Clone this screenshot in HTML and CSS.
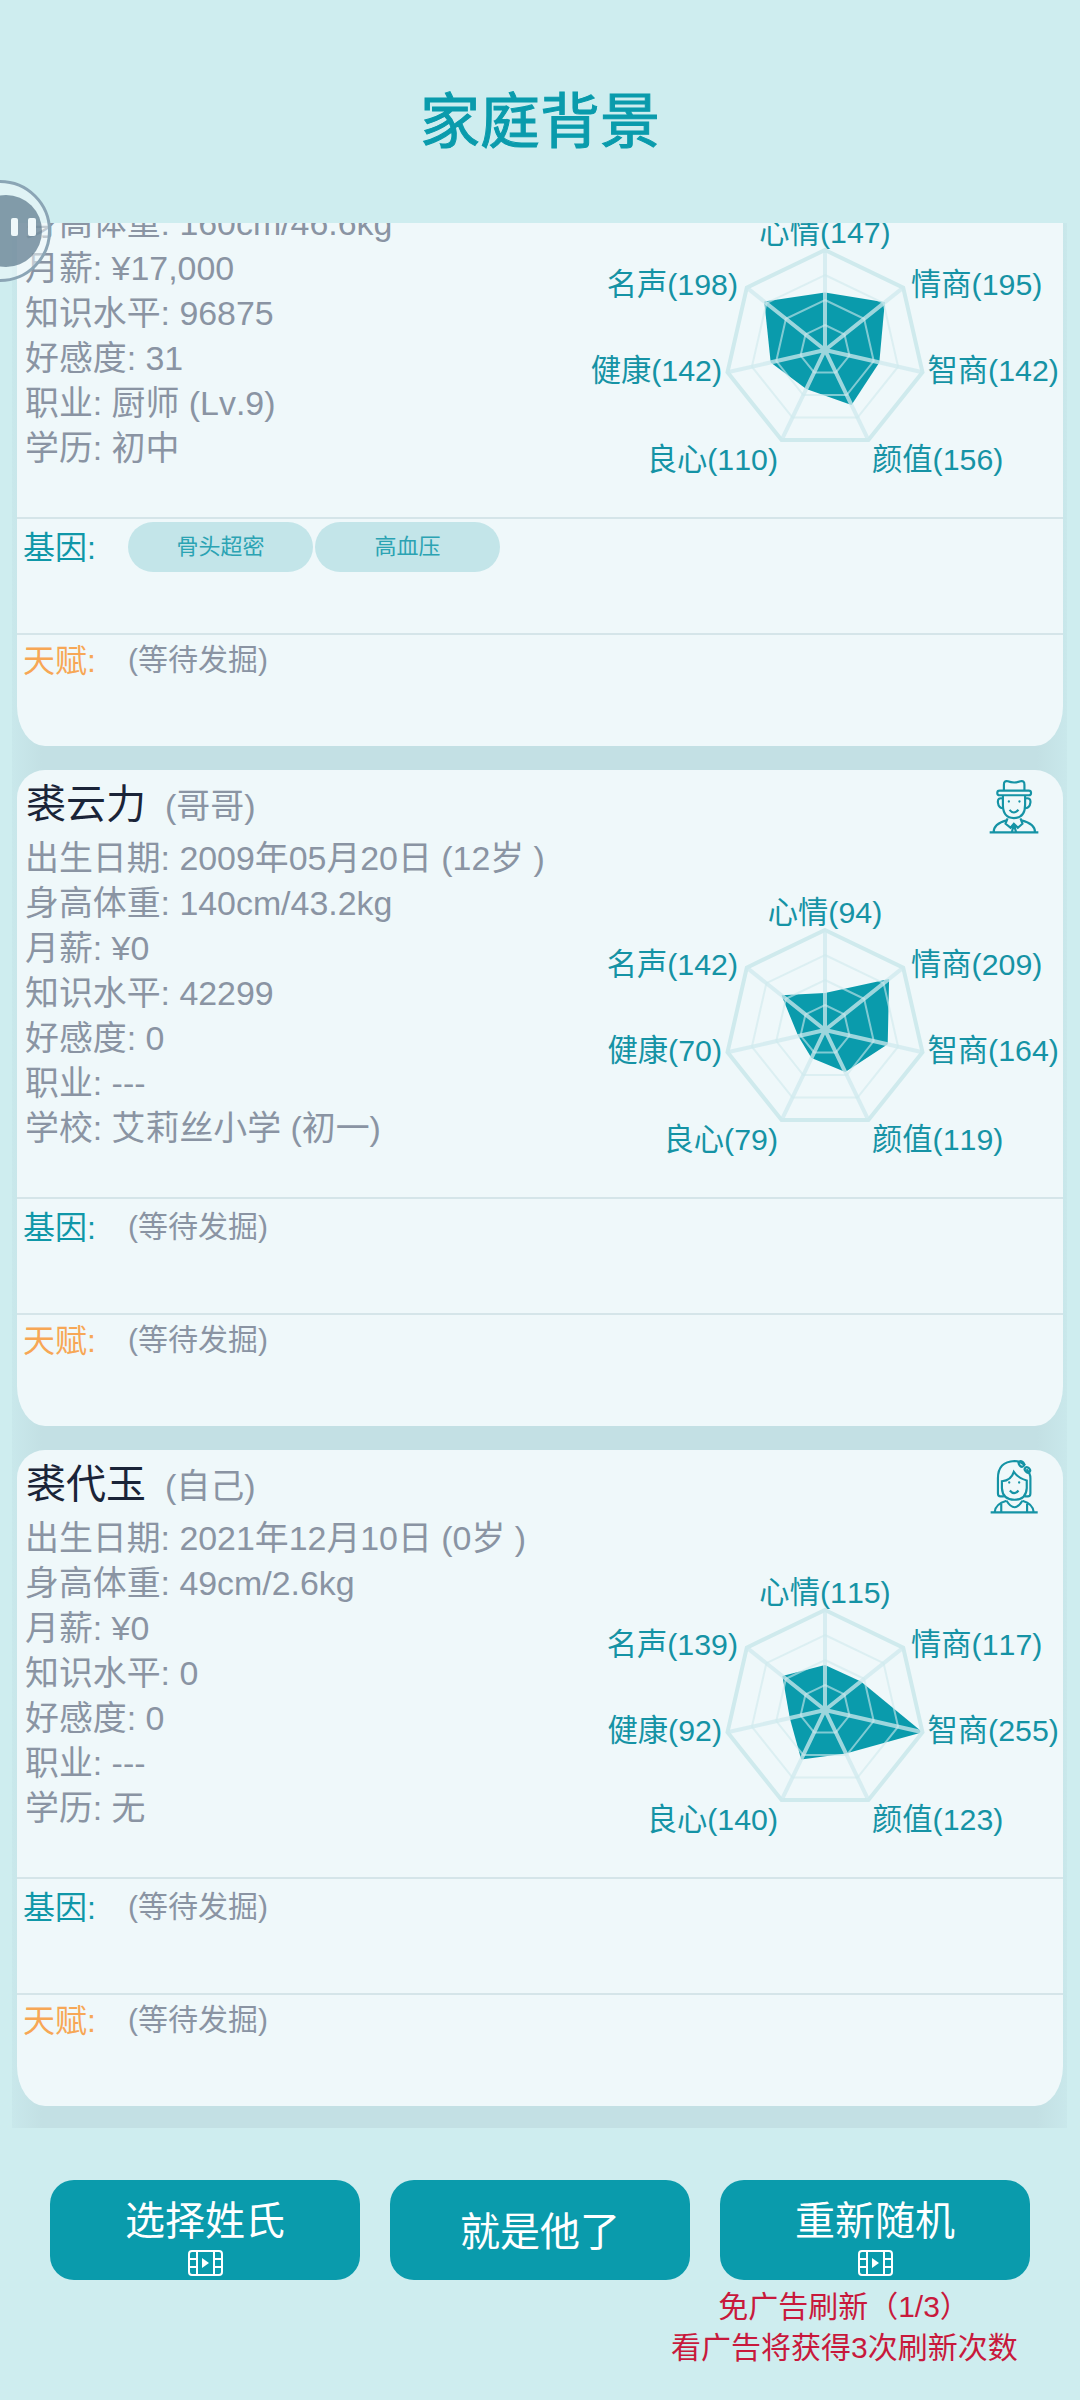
FILE: index.html
```html
<!DOCTYPE html>
<html lang="zh">
<head>
    <meta charset="UTF-8">
    <title>家庭背景</title>
    <link rel="stylesheet" href="styles.css">
</head>
<body>
    <svg class="defs">
        <defs>
            <g id="radar-grid">
                <polygon class="ring" points="0,-25 19.5,-15.6 24.4,5.6 10.8,22.5 -10.8,22.5 -24.4,5.6 -19.5,-15.6"/>
                <polygon class="ring" points="0,-50 39.1,-31.2 48.7,11.1 21.7,45 -21.7,45 -48.7,11.1 -39.1,-31.2"/>
                <polygon class="ring" points="0,-75 58.6,-46.8 73.1,16.7 32.5,67.6 -32.5,67.6 -73.1,16.7 -58.6,-46.8"/>
                <polygon class="ring-outer" points="0,-100 78.2,-62.4 97.5,22.3 43.4,90.1 -43.4,90.1 -97.5,22.3 -78.2,-62.4"/>
                <path class="spoke" d="M0 0L0 -100M0 0L78.2 -62.4M0 0L97.5 22.3M0 0L43.4 90.1M0 0L-43.4 90.1M0 0L-97.5 22.3M0 0L-78.2 -62.4"/>
            </g>
            <g id="ad-icon">
                <rect x="1" y="1" width="33" height="24" rx="3"/>
                <path d="M9 1V25M26 1V25M1 9H9M1 17H9M26 9H34M26 17H34"/>
                <polygon class="ad-play" points="14,8 21,13 14,18"/>
            </g>
        </defs>
    </svg>

    <header class="top-bar">
        <h1>家庭背景</h1>
    </header>

    <button class="float-ball">
        <span class="float-inner">
            <i></i><i></i>
        </span>
    </button>

    <main class="member-list">
        <!-- first card is already scrolled part way under the header -->
        <section class="card card-scrolled">
            <div class="card-body">
                <div class="info">
                    <p>身高体重: 160cm/46.6kg</p>
                    <p>月薪: ¥17,000</p>
                    <p>知识水平: 96875</p>
                    <p>好感度: 31</p>
                    <p>职业: 厨师 (Lv.9)</p>
                    <p>学历: 初中</p>
                </div>
                <svg class="radar" viewBox="-230 -194 460 361">
                    <polygon class="radar-data" points="0,-57.6 59.8,-47.7 54.3,12.4 26.5,55.1 -18.7,38.9 -54.3,12.4 -60.7,-48.4"/>
                    <use href="#radar-grid"/>
                    <text x="0" y="-107" text-anchor="middle">心情(147)</text>
                    <text x="86" y="-55">情商(195)</text>
                    <text x="102.5" y="31">智商(142)</text>
                    <text x="47" y="120">颜值(156)</text>
                    <text x="-47" y="120" text-anchor="end">良心(110)</text>
                    <text x="-103" y="31" text-anchor="end">健康(142)</text>
                    <text x="-87" y="-55" text-anchor="end">名声(198)</text>
                </svg>
            </div>
            <div class="trait-row gene-row">
                <span class="gene-label">基因:</span>
                <div class="chips">
                    <span class="chip">骨头超密</span>
                    <span class="chip">高血压</span>
                </div>
            </div>
            <div class="trait-row talent-row">
                <span class="talent-label">天赋:</span>
                <span class="pending">(等待发掘)</span>
            </div>
        </section>

        <section class="card">
            <div class="card-head">
                <span class="name">裘云力</span>
                <span class="relation">(哥哥)</span>
                <svg class="avatar" viewBox="80 55 160 170">
                    <path d="M128 92V74Q128 61 140 64Q159 71 178 64Q190 61 190 74V92"/>
                    <rect x="108" y="92" width="102" height="14" rx="7"/>
                    <path d="M125 106V135Q125 175 158 175Q192 175 192 135V106"/>
                    <path d="M125 116Q108 112 110 128Q112 145 127 145M192 116Q210 112 208 128Q206 145 190 145"/>
                    <circle class="dot" cx="143" cy="125" r="3.5"/>
                    <circle class="dot" cx="175" cy="125" r="3.5"/>
                    <path d="M145 150Q158 166 172 150"/>
                    <path d="M85 218H232M97 218Q97 192 136 182M222 218Q222 192 181 182"/>
                    <path d="M139 176L133 192L148 204L158 192L170 204L184 192L178 176M158 194L152 218M158 194L165 218"/>
                </svg>
            </div>
            <div class="card-body">
                <div class="info">
                    <p>出生日期: 2009年05月20日 (12岁 )</p>
                    <p>身高体重: 140cm/43.2kg</p>
                    <p>月薪: ¥0</p>
                    <p>知识水平: 42299</p>
                    <p>好感度: 0</p>
                    <p>职业: ---</p>
                    <p>学校: 艾莉丝小学 (初一)</p>
                </div>
                <svg class="radar" viewBox="-230 -194 460 361">
                    <polygon class="radar-data" points="0,-36.9 64.1,-51.1 62.7,14.3 20.3,42.1 -13.5,27.9 -26.8,6.1 -43.5,-34.7"/>
                    <use href="#radar-grid"/>
                    <text x="0" y="-107" text-anchor="middle">心情(94)</text>
                    <text x="86" y="-55">情商(209)</text>
                    <text x="102.5" y="31">智商(164)</text>
                    <text x="47" y="120">颜值(119)</text>
                    <text x="-47" y="120" text-anchor="end">良心(79)</text>
                    <text x="-103" y="31" text-anchor="end">健康(70)</text>
                    <text x="-87" y="-55" text-anchor="end">名声(142)</text>
                </svg>
            </div>
            <div class="trait-row gene-row">
                <span class="gene-label">基因:</span>
                <span class="pending">(等待发掘)</span>
            </div>
            <div class="trait-row talent-row">
                <span class="talent-label">天赋:</span>
                <span class="pending">(等待发掘)</span>
            </div>
        </section>

        <section class="card">
            <div class="card-head">
                <span class="name">裘代玉</span>
                <span class="relation">(自己)</span>
                <svg class="avatar" viewBox="80 55 160 170">
                    <path d="M128 170H118Q110 170 110 160V115Q110 65 160 63Q178 63 192 76M196 88Q208 100 208 115V160Q208 170 200 170H190"/>
                    <path d="M122 124Q150 122 158 96Q172 116 197 122V145Q195 180 160 180Q124 180 122 145Z"/>
                    <ellipse cx="181" cy="72" rx="9" ry="7" transform="rotate(45 181 72)"/>
                    <ellipse cx="199" cy="90" rx="9" ry="7" transform="rotate(45 199 90)"/>
                    <circle class="dot" cx="144" cy="128" r="3.5"/>
                    <circle class="dot" cx="174" cy="128" r="3.5"/>
                    <path d="M146 152Q159 168 172 152"/>
                    <path d="M88 218H230M100 218Q102 192 136 183M218 218Q216 192 184 183"/>
                    <path d="M120 218V192M198 218V192M136 183Q160 222 184 183"/>
                </svg>
            </div>
            <div class="card-body">
                <div class="info">
                    <p>出生日期: 2021年12月10日 (0岁 )</p>
                    <p>身高体重: 49cm/2.6kg</p>
                    <p>月薪: ¥0</p>
                    <p>知识水平: 0</p>
                    <p>好感度: 0</p>
                    <p>职业: ---</p>
                    <p>学历: 无</p>
                </div>
                <svg class="radar" viewBox="-230 -194 460 361">
                    <polygon class="radar-data" points="0,-45.1 35.9,-28.6 97.5,22.3 20.9,43.4 -23.8,49.5 -35.2,8 -42.6,-34"/>
                    <use href="#radar-grid"/>
                    <text x="0" y="-107" text-anchor="middle">心情(115)</text>
                    <text x="86" y="-55">情商(117)</text>
                    <text x="102.5" y="31">智商(255)</text>
                    <text x="47" y="120">颜值(123)</text>
                    <text x="-47" y="120" text-anchor="end">良心(140)</text>
                    <text x="-103" y="31" text-anchor="end">健康(92)</text>
                    <text x="-87" y="-55" text-anchor="end">名声(139)</text>
                </svg>
            </div>
            <div class="trait-row gene-row">
                <span class="gene-label">基因:</span>
                <span class="pending">(等待发掘)</span>
            </div>
            <div class="trait-row talent-row">
                <span class="talent-label">天赋:</span>
                <span class="pending">(等待发掘)</span>
            </div>
        </section>
    </main>

    <footer class="bottom-bar">
        <div class="actions">
            <button class="action-btn side-btn">
                <span>选择姓氏</span>
                <svg class="ad-icon" viewBox="0 0 35 26"><use href="#ad-icon"/></svg>
            </button>
            <button class="action-btn middle-btn">
                <span>就是他了</span>
            </button>
            <button class="action-btn side-btn">
                <span>重新随机</span>
                <svg class="ad-icon" viewBox="0 0 35 26"><use href="#ad-icon"/></svg>
            </button>
        </div>
        <p class="refresh-note">免广告刷新（1/3）<br>看广告将获得3次刷新次数</p>
    </footer>
</body>
</html>
```

FILE: styles.css
```css
html, body {
    margin: 0;
    width: 1080px;
    height: 2400px;
    overflow: hidden;
}

body {
    position: relative;
    display: flex;
    flex-direction: column;
    background: #ceedef;
    font-family: "Liberation Sans", "Noto Sans CJK SC", sans-serif;
    font-kerning: none;
}

.defs {
    display: none;
}

/* Header */
.top-bar {
    height: 223px;
    flex: none;
    box-sizing: border-box;
    padding-top: 87px;
    text-align: center;
}

.top-bar h1 {
    margin: 0;
    font-size: 60px;
    line-height: 72px;
    font-weight: 400;
    color: #0a9bac;
    -webkit-text-stroke: 1px #0a9bac;
}

/* Floating ball on the left edge */
.float-ball {
    position: absolute;
    left: -51px;
    top: 180px;
    width: 102px;
    height: 102px;
    padding: 0;
    box-sizing: border-box;
    border: 3px solid #8ba5b5;
    border-radius: 50%;
    background: rgba(239, 248, 250, 0.55);
    z-index: 5;
}

.float-inner {
    position: absolute;
    left: 18px;
    top: 12px;
    width: 72px;
    height: 72px;
    border-radius: 50%;
    background: rgba(92, 120, 140, 0.72);
}

.float-inner i {
    position: absolute;
    top: 23px;
    width: 7px;
    height: 18px;
    border-radius: 2px;
    background: #eff8fa;
}

.float-inner i:first-child { left: 41px; }
.float-inner i:last-child { left: 58px; width: 8px; }

/* Scrolling list */
.member-list {
    height: 1905px;
    flex: none;
    box-sizing: border-box;
    margin: 0 13px 0 12px;
    padding: 0 4px 0 5px;
    overflow: hidden;
    background: linear-gradient(to right, #c9e8eb, #c3e0e4 30px, #c3e0e4 calc(100% - 30px), #c9e8eb);
    display: flex;
    flex-direction: column;
    gap: 24px;
}

.card {
    flex: none;
    height: 656px;
    background: #eff8fa;
    border-radius: 28px 28px 28px 28px / 28px 28px 40px 40px;
}

.card-scrolled {
    height: 523px;
    border-radius: 0 0 28px 28px / 0 0 40px 40px;
}

.card-head {
    position: relative;
    height: 66px;
    padding-left: 9px;
    display: flex;
    align-items: baseline;
    line-height: 68px;
}

.name {
    font-size: 40px;
    color: #1a2438;
}

.relation {
    margin-left: 19px;
    font-size: 34px;
    color: #8a94a3;
}

.avatar {
    position: absolute;
    right: 22px;
    top: 8px;
    width: 53px;
    height: 57px;
    fill: none;
    stroke: #1593a5;
    stroke-width: 6.5;
}

.avatar .dot {
    fill: #1593a5;
    stroke: none;
}

.card-body {
    display: flex;
    justify-content: space-between;
    height: 361px;
}

.card-scrolled .card-body {
    margin-top: -67px;
}

.card-scrolled .info {
    padding-top: 45px;
}

.info {
    padding-left: 8px;
}

.info p {
    margin: 0;
    font-size: 33.9px;
    line-height: 45px;
    color: #8a94a3;
    white-space: nowrap;
}

.radar {
    flex: none;
    width: 460px;
    height: 361px;
    margin-right: 8px;
    overflow: visible;
}

.radar text {
    font-size: 30.3px;
    fill: #1593a5;
}

.radar-data {
    fill: #0a9bac;
}

.ring {
    fill: none;
    stroke: #cfeaed;
    stroke-opacity: 0.6;
    stroke-width: 2;
}

.ring-outer {
    fill: none;
    stroke: #cfeaed;
    stroke-width: 4;
}

.spoke {
    stroke: #cfeaed;
    stroke-opacity: 0.75;
    stroke-width: 4;
}

/* Gene and talent rows */
.trait-row {
    box-sizing: border-box;
    display: flex;
    align-items: flex-start;
    border-top: 2px solid #d5e5e9;
    padding: 3px 0 0 6px;
}

.gene-row {
    height: 116px;
}

.talent-row {
    height: 113px;
    padding-top: 0;
}

.gene-label, .talent-label {
    width: 105px;
    flex: none;
    font-size: 32px;
    line-height: 52px;
}

.gene-label {
    color: #0f97a8;
}

.talent-label {
    color: #f7a755;
}

.pending {
    font-size: 30px;
    line-height: 50px;
    color: #8a94a3;
}

.chips {
    display: flex;
    gap: 2px;
}

.chip {
    width: 185px;
    height: 50px;
    border-radius: 25px;
    background: #c3e5e9;
    color: #2ba3b3;
    font-size: 22px;
    line-height: 50px;
    text-align: center;
}

/* Bottom buttons */
.bottom-bar {
    flex: 1;
    padding-top: 52px;
}

.actions {
    display: flex;
    gap: 30px;
    padding: 0 50px;
}

.action-btn {
    height: 100px;
    padding: 0;
    border: none;
    border-radius: 24px;
    background: #0a9bac;
    color: #ffffff;
    font-family: inherit;
    font-size: 40px;
    display: flex;
    flex-direction: column;
    align-items: center;
}

.action-btn span {
    line-height: 48px;
}

.side-btn {
    width: 310px;
    padding-top: 17px;
}

.middle-btn {
    width: 300px;
    padding-top: 4px;
    justify-content: center;
}

.ad-icon {
    width: 35px;
    height: 26px;
    margin-top: 5px;
    fill: none;
    stroke: #ffffff;
    stroke-width: 2;
}

.ad-play {
    fill: #ffffff;
    stroke: none;
}

.refresh-note {
    width: 346px;
    margin: 6px 63px 0 auto;
    text-align: center;
    white-space: nowrap;
    font-size: 30px;
    line-height: 41px;
    color: #c8193c;
}
```
